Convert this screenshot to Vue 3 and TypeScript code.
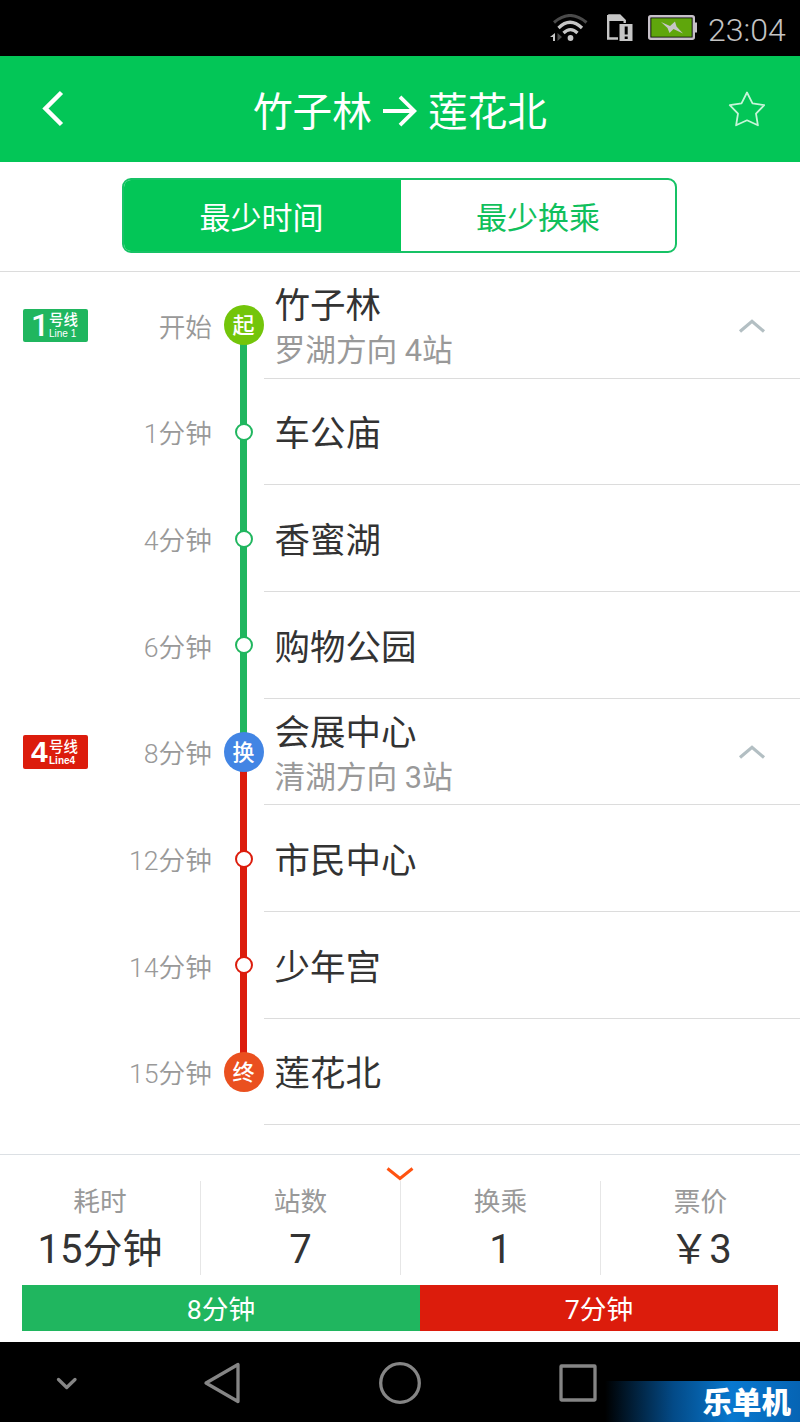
<script setup lang="ts">
interface Stop {
  time: string
  name: string
  direction?: string
  node?: { text: string; tone: string }
  line?: { number: string; tone: string; label: string }
  above?: string
  below?: string
}

const stops: Stop[] = [
  {
    time: '开始', name: '竹子林', direction: '罗湖方向 4站',
    node: { text: '起', tone: 'start' }, line: { number: '1', tone: 'green', label: 'Line 1' }, below: 'green',
  },
  { time: '1分钟', name: '车公庙', above: 'green', below: 'green' },
  { time: '4分钟', name: '香蜜湖', above: 'green', below: 'green' },
  { time: '6分钟', name: '购物公园', above: 'green', below: 'green' },
  {
    time: '8分钟', name: '会展中心', direction: '清湖方向 3站',
    node: { text: '换', tone: 'change' }, line: { number: '4', tone: 'red', label: 'Line4' }, above: 'green', below: 'red',
  },
  { time: '12分钟', name: '市民中心', above: 'red', below: 'red' },
  { time: '14分钟', name: '少年宫', above: 'red', below: 'red' },
  { time: '15分钟', name: '莲花北', node: { text: '终', tone: 'end' }, above: 'red' },
]

const stats = [
  { label: '耗时', value: '15分钟' },
  { label: '站数', value: '7' },
  { label: '换乘', value: '1' },
  { label: '票价', value: '￥3' },
]
</script>

<template>
  <div class="phone">
    <div class="status">
      <svg class="wifi" width="40" height="28" viewBox="0 0 40 28" fill="none">
        <path d="M4 8.500Q20 -5.500 36.500 8.500" stroke="#4a4a4a" stroke-width="3" />
        <path d="M8.500 14Q20 2.500 32 14" stroke="#c6c6c6" stroke-width="3.200" />
        <path d="M13.500 19Q20.500 12 27.500 19" stroke="#c6c6c6" stroke-width="3.200" />
        <circle cx="20.500" cy="24" r="2.900" fill="#c6c6c6" />
        <path d="M5 19v8H3v-4H0z" fill="#c6c6c6" />
        <path d="M7.500 19l4.500 4-4.500 4z" fill="#4a4a4a" />
      </svg>
      <svg class="sim" width="28" height="28" viewBox="0 0 28 28">
        <path d="M2.200 1.500h11.500l5 5v5M12 24.500H2.200v-23" fill="none" stroke="#c6c6c6" stroke-width="2.400" />
        <path d="M1 1h13l6 6H1z" fill="#c6c6c6" />
        <path d="M13 9.500h14v18H13z" fill="#c6c6c6" stroke="#000" stroke-width="1" />
        <path d="M18.700 12.500h3v8h-3zM18.700 22.500h3v2.500h-3z" fill="#000" />
      </svg>
      <svg class="battery" width="50" height="26" viewBox="0 0 50 26">
        <rect x="1.200" y="1.200" width="44.600" height="22.600" rx="1.500" fill="#000" stroke="#c6c0c8" stroke-width="2.400" />
        <rect x="3.300" y="3.300" width="40.400" height="18.400" fill="#5fa60c" />
        <path d="M46 7.500h3v10h-3z" fill="#c6c0c8" />
        <path d="M13 7l9 4L27 6.500l1.500 5 6.500 7-9.500-4.500-4 4-2-5z" fill="#c6c6c6" />
      </svg>
      <span class="clock">23:04</span>
    </div>

    <header class="header">
      <svg class="back" width="24" height="38" viewBox="0 0 24 38" fill="none">
        <path d="M20.500 2.500L4.500 18.500 20.500 34.500" stroke="#fff" stroke-width="4.500" />
      </svg>
      <h1 class="title">
        <span>竹子林</span>
        <svg width="34" height="32" viewBox="0 0 34 32" fill="none">
          <path d="M0 16H31M17 1.800L31.300 16 17 30.200" stroke="#fff" stroke-width="3.800" />
        </svg>
        <span>莲花北</span>
      </h1>
      <svg class="star" width="38" height="38" viewBox="0 0 38 38" fill="none">
        <path d="M19 2.500L24.500 13.300 36.200 15.200 28 23.700 29.900 35.300 19 30.300 8.100 35.300 10 23.700 1.800 15.200 13.500 13.300z" stroke="#c6f5d8" stroke-width="1.800" stroke-linejoin="round" />
      </svg>
    </header>

    <div class="tabs-area">
      <div class="tabs">
        <div class="tab active">最少时间</div>
        <div class="tab">最少换乘</div>
      </div>
    </div>

    <main class="route">
      <div v-for="stop in stops" :key="stop.name" class="stop">
        <div class="line-cell">
          <div v-if="stop.line" class="line-badge" :class="stop.line.tone">
            <b>{{ stop.line.number }}</b>
            <div class="line-text">
              <span class="line-zh">号线</span>
              <span class="line-en">{{ stop.line.label }}</span>
            </div>
          </div>
        </div>
        <div class="time">{{ stop.time }}</div>
        <div class="rail">
          <i class="track" :class="stop.above" />
          <i class="track" :class="stop.below" />
          <span v-if="stop.node" class="node" :class="stop.node.tone">{{ stop.node.text }}</span>
          <span v-else class="dot" :class="stop.above" />
        </div>
        <div class="info">
          <div>
            <div class="name">{{ stop.name }}</div>
            <div v-if="stop.direction" class="direction">{{ stop.direction }}</div>
          </div>
          <svg v-if="stop.direction" class="fold" width="28" height="16" viewBox="0 0 28 16" fill="none">
            <path d="M2 13.500L14 3.300 26 13.500" stroke="#b3bfc3" stroke-width="3.200" />
          </svg>
        </div>
      </div>
    </main>

    <footer class="summary">
      <svg class="expand" width="28" height="14" viewBox="0 0 28 14" fill="none">
        <path d="M1.500 1.500L14 11.500 26.500 1.500" stroke="#ff5311" stroke-width="3" />
      </svg>
      <div class="stats">
        <div v-for="stat in stats" :key="stat.label" class="stat">
          <div class="stat-label">{{ stat.label }}</div>
          <div class="stat-value">{{ stat.value }}</div>
        </div>
      </div>
      <div class="bar">
        <div class="segment first">8分钟</div>
        <div class="segment second">7分钟</div>
      </div>
    </footer>

    <nav class="nav">
      <svg width="800" height="80" viewBox="0 0 800 80" fill="none" stroke="#858585" stroke-width="3.300" stroke-linejoin="round" stroke-linecap="round">
        <path d="M58.500 37.500L66.700 45.500 75 37.500" />
        <path d="M206 41L238 22.500V59.500z" />
        <circle cx="400" cy="41" r="19.300" />
        <rect x="561" y="24" width="34" height="34" rx="0.500" />
      </svg>
      <div class="mark">乐单机</div>
    </nav>
  </div>
</template>

<style>
body {
  background: #fff;
}
</style>

<style scoped>
.phone {
  width: 800px;
  height: 1422px;
  display: flex;
  flex-direction: column;
  overflow: hidden;
  background: #fff;
  color: #333;
  font-family: Roboto, "Noto Sans CJK SC", sans-serif;
}
.phone * {
  box-sizing: border-box;
}
svg {
  display: block;
  flex: none;
}
.status {
  height: 55.500px;
  flex: none;
  display: flex;
  align-items: center;
  justify-content: flex-end;
  padding-right: 12px;
  background: #000;
}
.wifi {
  margin-right: 16px;
}
.sim {
  margin-right: 14px;
}
.battery {
  margin-right: 10px;
}
.clock {
  color: #c4c4c4;
  font-size: 32px;
  font-weight: 300;
  line-height: 36px;
  padding-top: 4px;
  width: 80px;
  white-space: nowrap;
}
.header {
  height: 106.500px;
  flex: none;
  display: flex;
  align-items: center;
  justify-content: space-between;
  padding: 0 34px 0 41px;
  background: #03c657;
  color: #fff;
}
.title {
  display: flex;
  align-items: center;
  gap: 11px;
  margin: 0 0 0 7px;
  font-size: 39.700px;
  font-weight: 400;
  line-height: 56px;
}
.title span {
  padding-top: 9px;
}
.title svg {
  margin-top: 4px;
}
.tabs-area {
  height: 110px;
  flex: none;
  display: flex;
  justify-content: center;
  align-items: flex-start;
  padding-top: 16px;
  border-bottom: 1px solid #dcdcdc;
}
.tabs {
  display: flex;
  width: 555px;
  height: 75px;
  margin-right: 1px;
  border: 2px solid #16c265;
  border-radius: 9px;
  overflow: hidden;
}
.tab {
  flex: 1;
  display: flex;
  align-items: center;
  justify-content: center;
  color: #10c05c;
  font-size: 31px;
}
.tab.active {
  flex: none;
  width: 277px;
  padding-right: 2px;
  background: #03c657;
  color: #fff;
}
.route {
  flex: none;
  height: 882px;
}
.stop {
  height: 106.670px;
  display: grid;
  grid-template-columns: 100px 112px 11.500px 40px 1fr;
}
.line-cell {
  display: flex;
  align-items: center;
  padding-left: 23px;
}
.line-badge {
  width: 64.500px;
  height: 33.500px;
  display: flex;
  align-items: center;
  gap: 1px;
  padding-left: 8px;
  border-radius: 2px;
  color: #fff;
}
.line-badge b {
  width: 17px;
  font-family: "Liberation Sans", Arial, sans-serif;
  font-size: 30px;
  line-height: 33px;
}
.line-badge.green b {
  font-family: Roboto, sans-serif;
  font-size: 32px;
  font-weight: 500;
}
.line-text {
  display: flex;
  flex-direction: column;
}
.line-zh {
  font-size: 14.500px;
  font-weight: 500;
  line-height: 16px;
  padding-top: 2px;
}
.line-en {
  font-family: "Liberation Sans", Arial, sans-serif;
  font-size: 10px;
  font-weight: 700;
  line-height: 10px;
  white-space: nowrap;
}
.line-badge.green .line-en {
  font-weight: 400;
}
.time {
  grid-column: 2;
  display: flex;
  align-items: center;
  justify-content: flex-end;
  color: #999;
  font-size: 26.700px;
  font-weight: 350;
}
.rail {
  grid-column: 4;
  position: relative;
  display: flex;
  flex-direction: column;
  align-items: center;
}
.track {
  width: 6.500px;
  flex: 1;
}
.track.green,
.line-badge.green {
  background: #20b65f;
}
.track.red,
.line-badge.red {
  background: #dc1c0c;
}
.node,
.dot {
  position: absolute;
  top: 50%;
  left: 50%;
  transform: translate(-50%, -50%);
  border-radius: 50%;
}
.node {
  width: 40px;
  height: 40px;
  color: #fff;
  font-size: 22px;
  font-weight: 500;
  line-height: 41px;
  text-align: center;
}
.node.start {
  background: #73c50a;
}
.node.change {
  background: #4285e4;
}
.node.end {
  background: #ea501f;
}
.dot {
  width: 18px;
  height: 18px;
  border: 2px solid;
  background: #fff;
}
.dot.green {
  border-color: #20b65f;
}
.dot.red {
  border-color: #dc1c0c;
}
.info {
  display: flex;
  align-items: center;
  justify-content: space-between;
  padding: 6px 34px 0 11px;
  border-bottom: 1px solid #dcdcdc;
}
.fold {
  margin-top: -4px;
}
.name {
  font-size: 35.500px;
  line-height: 48px;
}
.direction {
  color: #999;
  font-size: 30.700px;
  line-height: 44px;
  margin-top: -1px;
}
.summary {
  flex: none;
  height: 188px;
  border-top: 1px solid #dce0e4;
  position: relative;
  padding-top: 26px;
}
.expand {
  position: absolute;
  left: 386px;
  top: 12px;
}
.stats {
  display: flex;
  height: 94px;
}
.stat {
  width: 200px;
  text-align: center;
  white-space: nowrap;
}
.stat + .stat {
  border-left: 1px solid #e6e6e6;
}
.stat-label {
  color: #999;
  font-size: 26.700px;
  line-height: 40px;
  padding-top: 1px;
}
.stat-value {
  font-size: 40px;
  line-height: 54px;
  padding-top: 1px;
}
.bar {
  display: flex;
  height: 46px;
  margin: 10px 22px 0;
}
.segment {
  display: flex;
  align-items: center;
  justify-content: center;
  color: #fff;
  font-size: 26.700px;
  padding-bottom: 2px;
}
.first {
  width: 398px;
  background: #20b65f;
}
.second {
  flex: 1;
  background: #dc1c0c;
}
.nav {
  position: relative;
  flex: none;
  height: 80px;
  background: #000;
}
.mark {
  position: absolute;
  right: 0;
  bottom: 0;
  width: 195px;
  height: 41px;
  padding-right: 9px;
  background: linear-gradient(90deg, #000 0%, #034a87 35%, #0878cf 65%, #0664b4 100%);
  color: #fff;
  font-size: 29.500px;
  font-weight: 900;
  line-height: 44px;
  text-align: right;
}
</style>
